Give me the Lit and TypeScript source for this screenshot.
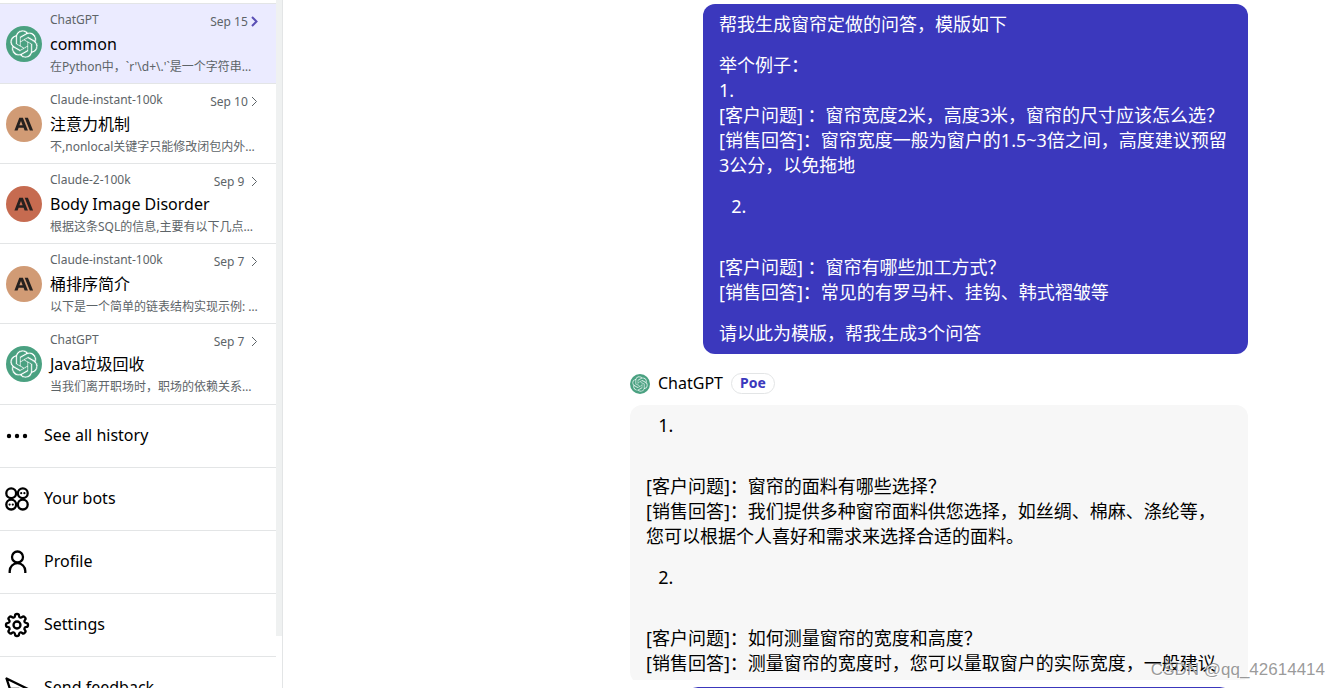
import { LitElement, html, css, svg } from "lit";
import { customElement, property } from "lit/decorators.js";
import { classMap } from "lit/directives/class-map.js";

const KNOT =
  "M22.2819 9.8211a5.9847 5.9847 0 0 0-.5157-4.9108 6.0462 6.0462 0 0 0-6.5098-2.9A6.0651 6.0651 0 0 0 4.9807 4.1818a5.9847 5.9847 0 0 0-3.9977 2.9 6.0462 6.0462 0 0 0 .7427 7.0966 5.98 5.98 0 0 0 .511 4.9107 6.051 6.051 0 0 0 6.5146 2.9001A5.9847 5.9847 0 0 0 13.2599 24a6.0557 6.0557 0 0 0 5.7718-4.2058 5.9894 5.9894 0 0 0 3.9977-2.9001 6.0557 6.0557 0 0 0-.7475-7.0729zm-9.022 12.6081a4.4755 4.4755 0 0 1-2.8764-1.0408l.1419-.0804 4.7783-2.7582a.7948.7948 0 0 0 .3927-.6813v-6.7369l2.02 1.1686a.071.071 0 0 1 .038.052v5.5826a4.504 4.504 0 0 1-4.4945 4.4944zm-9.6607-4.1254a4.4708 4.4708 0 0 1-.5346-3.0137l.142.0852 4.783 2.7582a.7712.7712 0 0 0 .7806 0l5.8428-3.3685v2.3324a.0804.0804 0 0 1-.0332.0615L9.74 19.9502a4.4992 4.4992 0 0 1-6.1408-1.6464zM2.3408 7.8956a4.485 4.485 0 0 1 2.3655-1.9728V11.6a.7664.7664 0 0 0 .3879.6765l5.8144 3.3543-2.0201 1.1685a.0757.0757 0 0 1-.071 0l-4.8303-2.7865A4.504 4.504 0 0 1 2.3408 7.872zm16.5963 3.8558L13.1038 8.364 15.1192 7.2a.0757.0757 0 0 1 .071 0l4.8303 2.7913a4.4944 4.4944 0 0 1-.6765 8.1042v-5.6772a.79.79 0 0 0-.407-.667zm2.0107-3.0231l-.142-.0852-4.7735-2.7818a.7759.7759 0 0 0-.7854 0L9.409 9.2297V6.8974a.0662.0662 0 0 1 .0284-.0615l4.8303-2.7866a4.4992 4.4992 0 0 1 6.6802 4.66zM8.3065 12.863l-2.02-1.1638a.0804.0804 0 0 1-.038-.0567V6.0742a4.4992 4.4992 0 0 1 7.3757-3.4537l-.142.0805L8.704 5.459a.7948.7948 0 0 0-.3927.6813zm1.0976-2.3654l2.602-1.4998 2.6069 1.4998v2.9994l-2.5974 1.4997-2.6067-1.4997Z";

type Bot = "chatgpt" | "instant" | "claude2";

@customElement("bot-avatar")
class BotAvatar extends LitElement {
  static styles = css`
    :host { display: block; flex: none; }
    .mark { display: block; width: 100%; height: 100%; }
  `;
  @property() bot: Bot = "chatgpt";
  render() {
    if (this.bot === "chatgpt") {
      return html`<svg class="mark" viewBox="0 0 36 36" aria-hidden="true">
        <circle cx="18" cy="18" r="18" fill="#4aa181" />
        <g transform="translate(4 4) scale(1.167)">
          <path d=${KNOT} fill="#fff" stroke="#4aa181" stroke-width="0.6" />
        </g>
      </svg>`;
    }
    const fill = this.bot === "instant" ? "#d19b75" : "#c66b50";
    return html`<svg class="mark" viewBox="0 0 36 36" aria-hidden="true">
      <circle cx="18" cy="18" r="18" fill=${fill} />
      <path fill="#26211f" fill-rule="evenodd"
        d="M13.3 11.8h3.6l5 12.6h-3.3l-1-2.6h-5l-1 2.6H8.4zM15 15l-1.600 4.200h3.200zM18.700 11.800h3.200l5.200 12.600h-3.300z" />
    </svg>`;
  }
}

interface Chat {
  bot: Bot;
  name: string;
  title: string;
  preview: string;
  date: string;
  active?: boolean;
}

const chats: Chat[] = [
  { bot: "chatgpt", name: "ChatGPT", title: "common", preview: "在Python中，`r'\\d+\\.'`是一个字符串匹配", date: "Sep 15", active: true },
  { bot: "instant", name: "Claude-instant-100k", title: "注意力机制", preview: "不,nonlocal关键字只能修改闭包内外层变量", date: "Sep 10" },
  { bot: "claude2", name: "Claude-2-100k", title: "Body Image Disorder", preview: "根据这条SQL的信息,主要有以下几点可以", date: "Sep 9" },
  { bot: "instant", name: "Claude-instant-100k", title: "桶排序简介", preview: "以下是一个简单的链表结构实现示例: 链表结构", date: "Sep 7" },
  { bot: "chatgpt", name: "ChatGPT", title: "Java垃圾回收", preview: "当我们离开职场时，职场的依赖关系也会", date: "Sep 7" },
];

/* Eight rounded teeth: corner points joined by quadratic curves through their midpoints. */
function gearPath(cx: number, cy: number, outer: number, inner: number): string {
  const pts: [number, number][] = [];
  for (let i = 0; i < 8; i++) {
    for (const [deg, r] of [[-10, outer], [10, outer], [14, inner], [31, inner]]) {
      const a = ((i * 45 + deg - 90) * Math.PI) / 180;
      pts.push([cx + r * Math.cos(a), cy + r * Math.sin(a)]);
    }
  }
  const mid = (p: [number, number], q: [number, number]) =>
    `${((p[0] + q[0]) / 2).toFixed(2)} ${((p[1] + q[1]) / 2).toFixed(2)}`;
  const n = pts.length;
  let d = `M${mid(pts[n - 1], pts[0])}`;
  pts.forEach((p, i) => {
    d += `Q${p[0].toFixed(2)} ${p[1].toFixed(2)} ${mid(p, pts[(i + 1) % n])}`;
  });
  return d + "Z";
}

const glyph = (body: unknown) => html`<svg class="glyph" viewBox="0 0 24 24" fill="none" stroke="currentColor"
  stroke-width="2.3" stroke-linecap="round" stroke-linejoin="round" aria-hidden="true">${body}</svg>`;

const menu = [
  { label: "See all history", icon: glyph(svg`<g fill="currentColor" stroke="none"><circle cx="4" cy="13" r="2.2"/><circle cx="12" cy="13" r="2.2"/><circle cx="20" cy="13" r="2.2"/></g>`) },
  { label: "Your bots", icon: glyph(svg`<circle cx="6.2" cy="7.2" r="4.9"/><circle cx="17.8" cy="7.2" r="4.9"/><circle cx="6.2" cy="18.6" r="4.9"/><circle cx="17.8" cy="18.6" r="4.9"/><g fill="currentColor" stroke="none"><circle cx="16.2" cy="7.2" r="1.1"/><circle cx="19.4" cy="7.2" r="1.1"/><circle cx="4.6" cy="18.6" r="1.1"/><circle cx="7.8" cy="18.6" r="1.1"/></g>`) },
  { label: "Profile", icon: glyph(svg`<circle cx="12.5" cy="8" r="5.5"/><path stroke-linecap="butt" d="M4.700 24v-2a7.800 7.800 0 0 1 15.600 0v2"/>`) },
  { label: "Settings", icon: glyph(svg`<circle cx="12" cy="13" r="3.5"/><path d=${gearPath(12, 13, 11.2, 8.2)} />`) },
  { label: "Send feedback", icon: glyph(svg`<path d="M1.500 3.500 23 14 1.500 24l3.500-10zM5 14h9"/>`) },
];

@customElement("chat-sidebar")
class ChatSidebar extends LitElement {
  static styles = css`
    :host { display: flex; overflow: hidden; border-right: 1px solid #e3e5e6; box-sizing: border-box; }
    .nav { flex: 1; min-width: 0; padding-top: 3px; }
    .history { padding-bottom: 1px; }
    .row {
      display: grid; grid-template-columns: 36px minmax(0, 1fr); column-gap: 8px; align-items: center; align-content: start;
      box-sizing: border-box; height: 80px; padding: 6px 16px 0 6px;
      border-top: 1px solid #e3e5e6; color: #000; text-decoration: none;
    }
    .active { background: #ebebff; }
    .avatar { width: 36px; height: 36px; }
    .top { display: flex; justify-content: space-between; font-size: 12px; line-height: 20px; color: #5d6468; }
    .date { display: flex; align-items: center; padding-top: 2px; }
    .day { width: 42px; text-align: center; }
    .chev { width: 10px; height: 12px; stroke-width: 1; }
    .active .chev { color: #5a4fb5; stroke-width: 2; }
    .title { font-size: 16px; line-height: 24px; white-space: nowrap; }
    .preview { font-size: 12px; line-height: 22px; color: #5d6468; overflow: hidden; text-overflow: ellipsis; white-space: nowrap; }
    .item {
      display: flex; align-items: center; gap: 15px; box-sizing: border-box; height: 63px; padding: 0 5px 2px;
      border-top: 1px solid #e3e5e6; color: #000; font-size: 16px; line-height: 24px; text-decoration: none;
    }
    .glyph { width: 24px; height: 24px; flex: none; overflow: visible; }
    .track { flex: none; width: 6px; }
    .thumb { height: 636px; background: #eff1f1; }
  `;
  render() {
    return html`
      <nav class="nav">
        <div class="history">
          ${chats.map((c) => html`
            <a href="#" class=${classMap({ row: true, active: !!c.active })}>
              <bot-avatar class="avatar" .bot=${c.bot}></bot-avatar>
              <div>
                <div class="top"><span>${c.name}</span><span class="date"><span class="day">${c.date}</span>
                  <svg class="chev" viewBox="0 0 10 12" fill="none" stroke="currentColor" aria-hidden="true"><path d="M2 1l4.500 4.500L2 10"/></svg></span></div>
                <div class="title">${c.title}</div>
                <div class="preview">${c.preview}</div>
              </div>
            </a>`)}
        </div>
        ${menu.map((m) => html`<a href="#" class="item">${m.icon}<span>${m.label}</span></a>`)}
      </nav>
      <div class="track"><div class="thumb"></div></div>
    `;
  }
}

@customElement("app-root")
class AppRoot extends LitElement {
  static styles = css`
    :host {
      display: grid; grid-template-columns: 283px minmax(0, 1fr); grid-template-rows: minmax(0, 1fr);
      height: 100vh; overflow: hidden; background: #fff; color: #000;
      font-family: "Noto Sans", "Noto Sans CJK SC", sans-serif;
    }
    .main { display: flex; flex-direction: column; align-items: flex-end; min-width: 0; padding-right: 92px; }
    .log {
      flex: 1; min-height: 0; overflow: hidden; box-sizing: border-box; width: 100%; max-width: 618px;
      padding-top: 4px; display: flex; flex-direction: column;
    }
    .bubble { flex: none; box-sizing: border-box; padding: 8px 16px; border-radius: 12px; font-size: 18px; line-height: 25px; }
    .user { align-self: flex-end; max-width: 545px; background: #3b38bd; color: #fff; }
    .bot { background: #f7f7f7; }
    .bubble p { margin: 0 0 16px; }
    .bubble p:last-child { margin-bottom: 0; }
    .bubble ol { margin: 0 0 36px; padding-left: 32px; }
    .bubble li { height: 25px; }
    .head { display: flex; align-items: center; gap: 8px; flex: none; padding: 18px 0 10px; font-size: 16px; line-height: 23px; }
    .small { width: 20px; height: 20px; }
    .tag {
      box-sizing: border-box; height: 21px; padding: 0 8px; border: 1px solid #e3e5e6; border-radius: 11px;
      color: #3b38bd; font-size: 14px; font-weight: 700; line-height: 18px;
    }
    .composer { flex: none; box-sizing: border-box; width: 100%; max-width: 618px; height: 8px; padding: 7px 16px 0 56px; overflow: hidden; }
    .input {
      display: block; box-sizing: border-box; width: 100%; height: 42px; padding: 8px 16px; resize: none;
      border: 1px solid #3b38bd; border-radius: 12px; outline: none; font: inherit;
    }
    .credit {
      position: absolute; right: 15px; bottom: 8px; font-family: "Liberation Sans", sans-serif; font-size: 17px; line-height: 20px;
      color: rgba(110, 110, 110, 0.7); text-shadow: 1px 1px 0 #fff; pointer-events: none;
    }
  `;
  render() {
    return html`
      <chat-sidebar></chat-sidebar>
      <main class="main">
        <div class="log">
          <article class="bubble user">
            <p>帮我生成窗帘定做的问答，模版如下</p>
            <p>举个例子：<br />1.<br />[客户问题] ：窗帘宽度2米，高度3米，窗帘的尺寸应该怎么选？<br />[销售回答]：窗帘宽度一般为窗户的1.5~3倍之间，高度建议预留3公分，以免拖地</p>
            <ol start="2"><li></li></ol>
            <p>[客户问题] ：窗帘有哪些加工方式？<br />[销售回答]：常见的有罗马杆、挂钩、韩式褶皱等</p>
            <p>请以此为模版，帮我生成3个问答</p>
          </article>
          <div class="head">
            <bot-avatar class="small" .bot=${"chatgpt"}></bot-avatar>
            <span>ChatGPT</span><span class="tag">Poe</span>
          </div>
          <article class="bubble bot">
            <ol><li></li></ol>
            <p>[客户问题]：窗帘的面料有哪些选择？<br />[销售回答]：我们提供多种窗帘面料供您选择，如丝绸、棉麻、涤纶等，您可以根据个人喜好和需求来选择合适的面料。</p>
            <ol start="2"><li></li></ol>
            <p>[客户问题]：如何测量窗帘的宽度和高度？<br />[销售回答]：测量窗帘的宽度时，您可以量取窗户的实际宽度，一般建议</p>
          </article>
        </div>
        <form class="composer"><textarea class="input" aria-label="Message"></textarea></form>
      </main>
      <div class="credit">CSDN @qq_42614414</div>
    `;
  }
}
